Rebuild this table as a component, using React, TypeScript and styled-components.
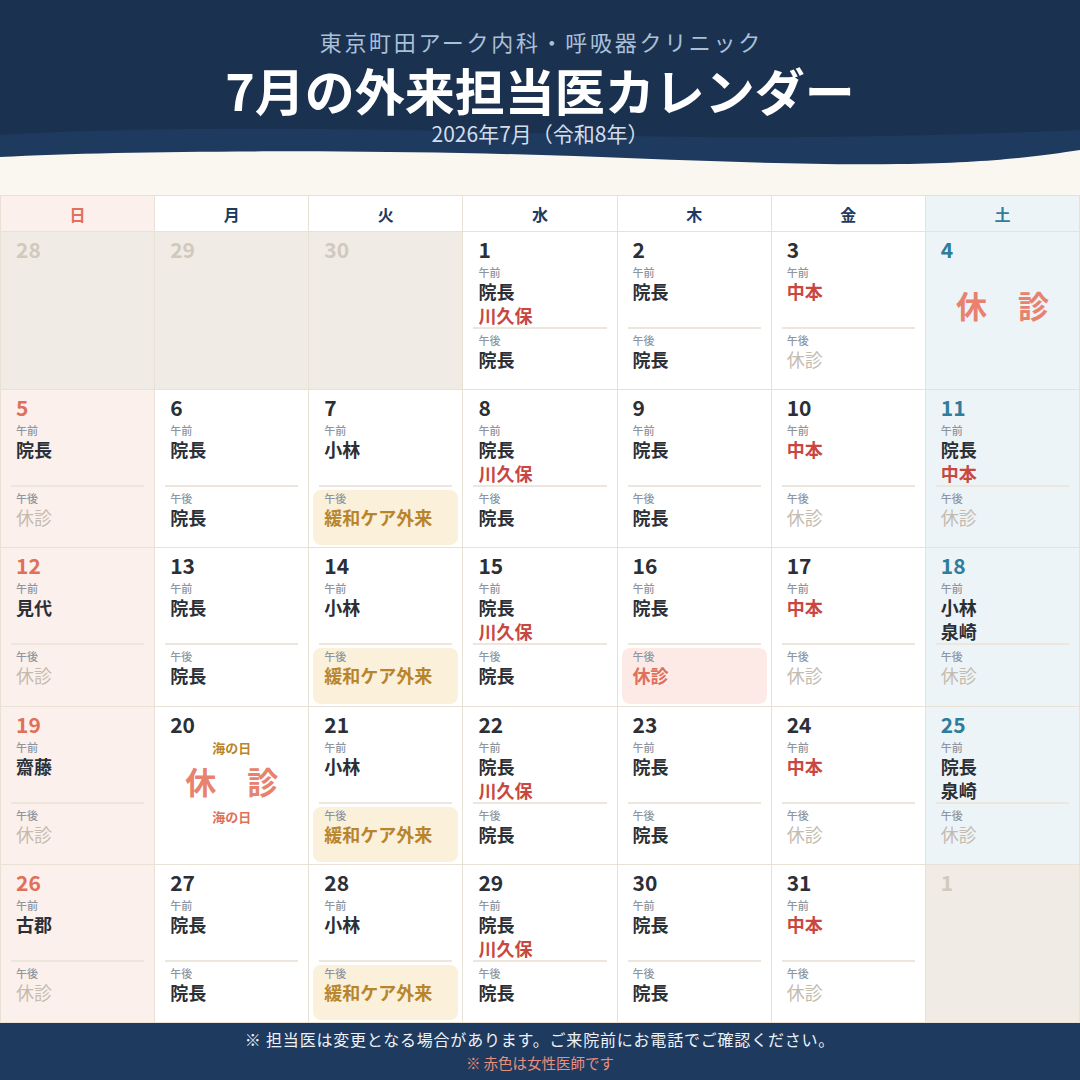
import React from 'react';
import styled, { createGlobalStyle } from 'styled-components';

const GlobalStyle = createGlobalStyle`
  html, body { margin: 0; padding: 0; background: #faf7f0; }
  body { font-family: "Noto Sans CJK JP", "Noto Sans", sans-serif; }
  * { box-sizing: border-box; }
`;

type Tone = 'dark' | 'red' | 'off' | 'care' | 'closed';
type Kind = 'normal' | 'sun' | 'sat' | 'out';
type Highlight = 'none' | 'care' | 'closed';

const nameColors: Record<Tone, string> = {
  dark: '#2b2f36',
  red: '#c9473f',
  off: '#c4bbaf',
  care: '#b8852c',
  closed: '#e0705a',
};

const cellBg: Record<Kind, string> = {
  normal: '#ffffff',
  sun: '#fcf0ec',
  sat: '#edf4f8',
  out: '#f0ebe4',
};

const dateColors: Record<Kind, string> = {
  normal: '#2b2f36',
  sun: '#e0705a',
  sat: '#2e7d9a',
  out: '#d0c9bd',
};

const pmBg: Record<Highlight, string> = {
  none: 'transparent',
  care: '#fbf0da',
  closed: '#fdeae7',
};

const Page = styled.div`
  width: 1080px;
  height: 1080px;
  display: flex;
  flex-direction: column;
  background: #faf7f0;
  overflow: hidden;
`;

const Header = styled.header`
  position: relative;
  height: 195px;
  padding-top: 26px;
  background: #1b3150;
  display: flex;
  flex-direction: column;
  align-items: center;
`;

const Wave = styled.svg`
  position: absolute;
  left: 0;
  top: 0;
  width: 1080px;
  height: 195px;
  z-index: 0;
`;

const Clinic = styled.div`
  position: relative;
  z-index: 1;
  font-size: 22px;
  line-height: 30px;
  letter-spacing: 2.7px;
  padding-left: 2.7px;
  color: #a9c0d8;
`;

const Title = styled.h1`
  position: relative;
  z-index: 1;
  margin: 8px 0 0;
  font-size: 50px;
  line-height: 50px;
  font-weight: 700;
  color: #ffffff;
`;

const Sub = styled.div`
  position: relative;
  z-index: 1;
  margin-top: 6px;
  font-size: 21px;
  line-height: 26px;
  color: #d3deea;
`;

const Grid = styled.div`
  height: 828px;
  display: grid;
  grid-template-columns: repeat(7, 1fr);
  grid-template-rows: 35px repeat(5, 1fr);
  gap: 1px;
  background: #e8e2d6;
  border: 1px solid #e8e2d6;
`;

const DayHead = styled.div<{ $kind: Kind }>`
  display: flex;
  align-items: center;
  justify-content: center;
  font-size: 16px;
  font-weight: 700;
  background: ${(p) => (p.$kind === 'normal' ? '#ffffff' : cellBg[p.$kind])};
  color: ${(p) => (p.$kind === 'sun' ? '#e0705a' : p.$kind === 'sat' ? '#2e7d9a' : '#1f3a5f')};
`;

const Cell = styled.div<{ $kind: Kind }>`
  display: flex;
  flex-direction: column;
  padding: 4px 4px 2px;
  min-height: 0;
  background: ${(p) => cellBg[p.$kind]};
`;

const DateNum = styled.div<{ $kind: Kind }>`
  padding: 0 11px;
  font-size: 21px;
  line-height: 26px;
  font-weight: 700;
  color: ${(p) => dateColors[p.$kind]};
`;

const AM = styled.div`
  height: 65px;
  padding: 0 11px;
`;

const Label = styled.div<{ $first?: boolean }>`
  margin-top: ${(p) => (p.$first ? '4px' : '0')};
  font-size: 11px;
  line-height: 13px;
  font-weight: 500;
  color: #8d96a0;
`;

const Name = styled.div<{ $tone: Tone }>`
  font-size: 18px;
  line-height: 24px;
  font-weight: ${(p) => (p.$tone === 'off' ? 400 : 700)};
  color: ${(p) => nameColors[p.$tone]};
`;

const Divider = styled.div`
  height: 2px;
  margin: 0 6px;
  background: #ece6dc;
`;

const PM = styled.div<{ $hl: Highlight }>`
  flex: 1;
  margin-top: 3px;
  padding: 2px 11px 0;
  border-radius: 8px;
  background: ${(p) => pmBg[p.$hl]};
`;

const ClosedBig = styled.div<{ $top: number }>`
  margin-top: ${(p) => p.$top}px;
  text-align: center;
  font-size: 31px;
  line-height: 36px;
  font-weight: 700;
  color: #e8826e;
`;

const HolidayTag = styled.div<{ $tone: 'gold' | 'red'; $top: number }>`
  margin-top: ${(p) => p.$top}px;
  text-align: center;
  font-size: 13px;
  line-height: 16px;
  font-weight: 700;
  color: ${(p) => (p.$tone === 'gold' ? '#b8852c' : '#e0705a')};
`;

const Footer = styled.footer`
  flex: 1;
  background: #1f3a5f;
  padding-top: 5px;
  text-align: center;
`;

const Note = styled.div`
  font-size: 16px;
  line-height: 22px;
  letter-spacing: 0.8px;
  color: #eef2f6;
`;

const Note2 = styled.div`
  margin-top: 4px;
  font-size: 14.5px;
  line-height: 18px;
  color: #e8907e;
`;

type NameItem = { t: string; c: Tone };
type Day = {
  d: number;
  kind: Kind;
  am?: NameItem[];
  pm?: NameItem;
  hl?: Highlight;
  special?: 'closed' | 'holiday';
};

const k = (t: string): NameItem => ({ t, c: 'dark' });
const r = (t: string): NameItem => ({ t, c: 'red' });
const off: NameItem = { t: '休診', c: 'off' };
const care: NameItem = { t: '緩和ケア外来', c: 'care' };

const heads: { t: string; kind: Kind }[] = [
  { t: '日', kind: 'sun' },
  { t: '月', kind: 'normal' },
  { t: '火', kind: 'normal' },
  { t: '水', kind: 'normal' },
  { t: '木', kind: 'normal' },
  { t: '金', kind: 'normal' },
  { t: '土', kind: 'sat' },
];

const days: Day[] = [
  { d: 28, kind: 'out' },
  { d: 29, kind: 'out' },
  { d: 30, kind: 'out' },
  { d: 1, kind: 'normal', am: [k('院長'), r('川久保')], pm: k('院長') },
  { d: 2, kind: 'normal', am: [k('院長')], pm: k('院長') },
  { d: 3, kind: 'normal', am: [r('中本')], pm: off },
  { d: 4, kind: 'sat', special: 'closed' },

  { d: 5, kind: 'sun', am: [k('院長')], pm: off },
  { d: 6, kind: 'normal', am: [k('院長')], pm: k('院長') },
  { d: 7, kind: 'normal', am: [k('小林')], pm: care, hl: 'care' },
  { d: 8, kind: 'normal', am: [k('院長'), r('川久保')], pm: k('院長') },
  { d: 9, kind: 'normal', am: [k('院長')], pm: k('院長') },
  { d: 10, kind: 'normal', am: [r('中本')], pm: off },
  { d: 11, kind: 'sat', am: [k('院長'), r('中本')], pm: off },

  { d: 12, kind: 'sun', am: [k('見代')], pm: off },
  { d: 13, kind: 'normal', am: [k('院長')], pm: k('院長') },
  { d: 14, kind: 'normal', am: [k('小林')], pm: care, hl: 'care' },
  { d: 15, kind: 'normal', am: [k('院長'), r('川久保')], pm: k('院長') },
  { d: 16, kind: 'normal', am: [k('院長')], pm: { t: '休診', c: 'closed' }, hl: 'closed' },
  { d: 17, kind: 'normal', am: [r('中本')], pm: off },
  { d: 18, kind: 'sat', am: [k('小林'), k('泉崎')], pm: off },

  { d: 19, kind: 'sun', am: [k('齋藤')], pm: off },
  { d: 20, kind: 'normal', special: 'holiday' },
  { d: 21, kind: 'normal', am: [k('小林')], pm: care, hl: 'care' },
  { d: 22, kind: 'normal', am: [k('院長'), r('川久保')], pm: k('院長') },
  { d: 23, kind: 'normal', am: [k('院長')], pm: k('院長') },
  { d: 24, kind: 'normal', am: [r('中本')], pm: off },
  { d: 25, kind: 'sat', am: [k('院長'), k('泉崎')], pm: off },

  { d: 26, kind: 'sun', am: [k('古郡')], pm: off },
  { d: 27, kind: 'normal', am: [k('院長')], pm: k('院長') },
  { d: 28, kind: 'normal', am: [k('小林')], pm: care, hl: 'care' },
  { d: 29, kind: 'normal', am: [k('院長'), r('川久保')], pm: k('院長') },
  { d: 30, kind: 'normal', am: [k('院長')], pm: k('院長') },
  { d: 31, kind: 'normal', am: [r('中本')], pm: off },
  { d: 1, kind: 'out' },
];

const DayCell: React.FC<{ day: Day }> = ({ day }) => {
  if (day.kind === 'out') {
    return (
      <Cell $kind="out">
        <DateNum $kind="out">{day.d}</DateNum>
      </Cell>
    );
  }
  if (day.special === 'closed') {
    return (
      <Cell $kind={day.kind}>
        <DateNum $kind={day.kind}>{day.d}</DateNum>
        <ClosedBig $top={25}>休　診</ClosedBig>
      </Cell>
    );
  }
  if (day.special === 'holiday') {
    return (
      <Cell $kind={day.kind}>
        <DateNum $kind={day.kind}>{day.d}</DateNum>
        <HolidayTag $tone="gold" $top={3}>海の日</HolidayTag>
        <ClosedBig $top={7}>休　診</ClosedBig>
        <HolidayTag $tone="red" $top={10}>海の日</HolidayTag>
      </Cell>
    );
  }
  return (
    <Cell $kind={day.kind}>
      <DateNum $kind={day.kind}>{day.d}</DateNum>
      <AM>
        <Label $first>午前</Label>
        {day.am?.map((n, i) => (
          <Name key={i} $tone={n.c}>
            {n.t}
          </Name>
        ))}
      </AM>
      <Divider />
      <PM $hl={day.hl ?? 'none'}>
        <Label>午後</Label>
        {day.pm && <Name $tone={day.pm.c}>{day.pm.t}</Name>}
      </PM>
    </Cell>
  );
};

export default function App() {
  return (
    <Page>
      <GlobalStyle />
      <Header>
        <Wave viewBox="0 0 1080 195" preserveAspectRatio="none" aria-hidden="true">
          <path
            d="M0,135 C150,126 380,128 560,134 C720,139 860,139 1080,130 L1080,195 L0,195 Z"
            fill="#1f3a5f"
          />
          <path
            d="M0,157 C110,151 280,150 460,153 C620,156 760,166 900,164 C990,163 1040,156 1080,150 L1080,195 L0,195 Z"
            fill="#faf7f0"
          />
        </Wave>
        <Clinic>東京町田アーク内科・呼吸器クリニック</Clinic>
        <Title>7月の外来担当医カレンダー</Title>
        <Sub>2026年7月（令和8年）</Sub>
      </Header>
      <Grid>
        {heads.map((h) => (
          <DayHead key={h.t} $kind={h.kind}>
            {h.t}
          </DayHead>
        ))}
        {days.map((day, i) => (
          <DayCell key={i} day={day} />
        ))}
      </Grid>
      <Footer>
        <Note>※ 担当医は変更となる場合があります。ご来院前にお電話でご確認ください。</Note>
        <Note2>※ 赤色は女性医師です</Note2>
      </Footer>
    </Page>
  );
}
